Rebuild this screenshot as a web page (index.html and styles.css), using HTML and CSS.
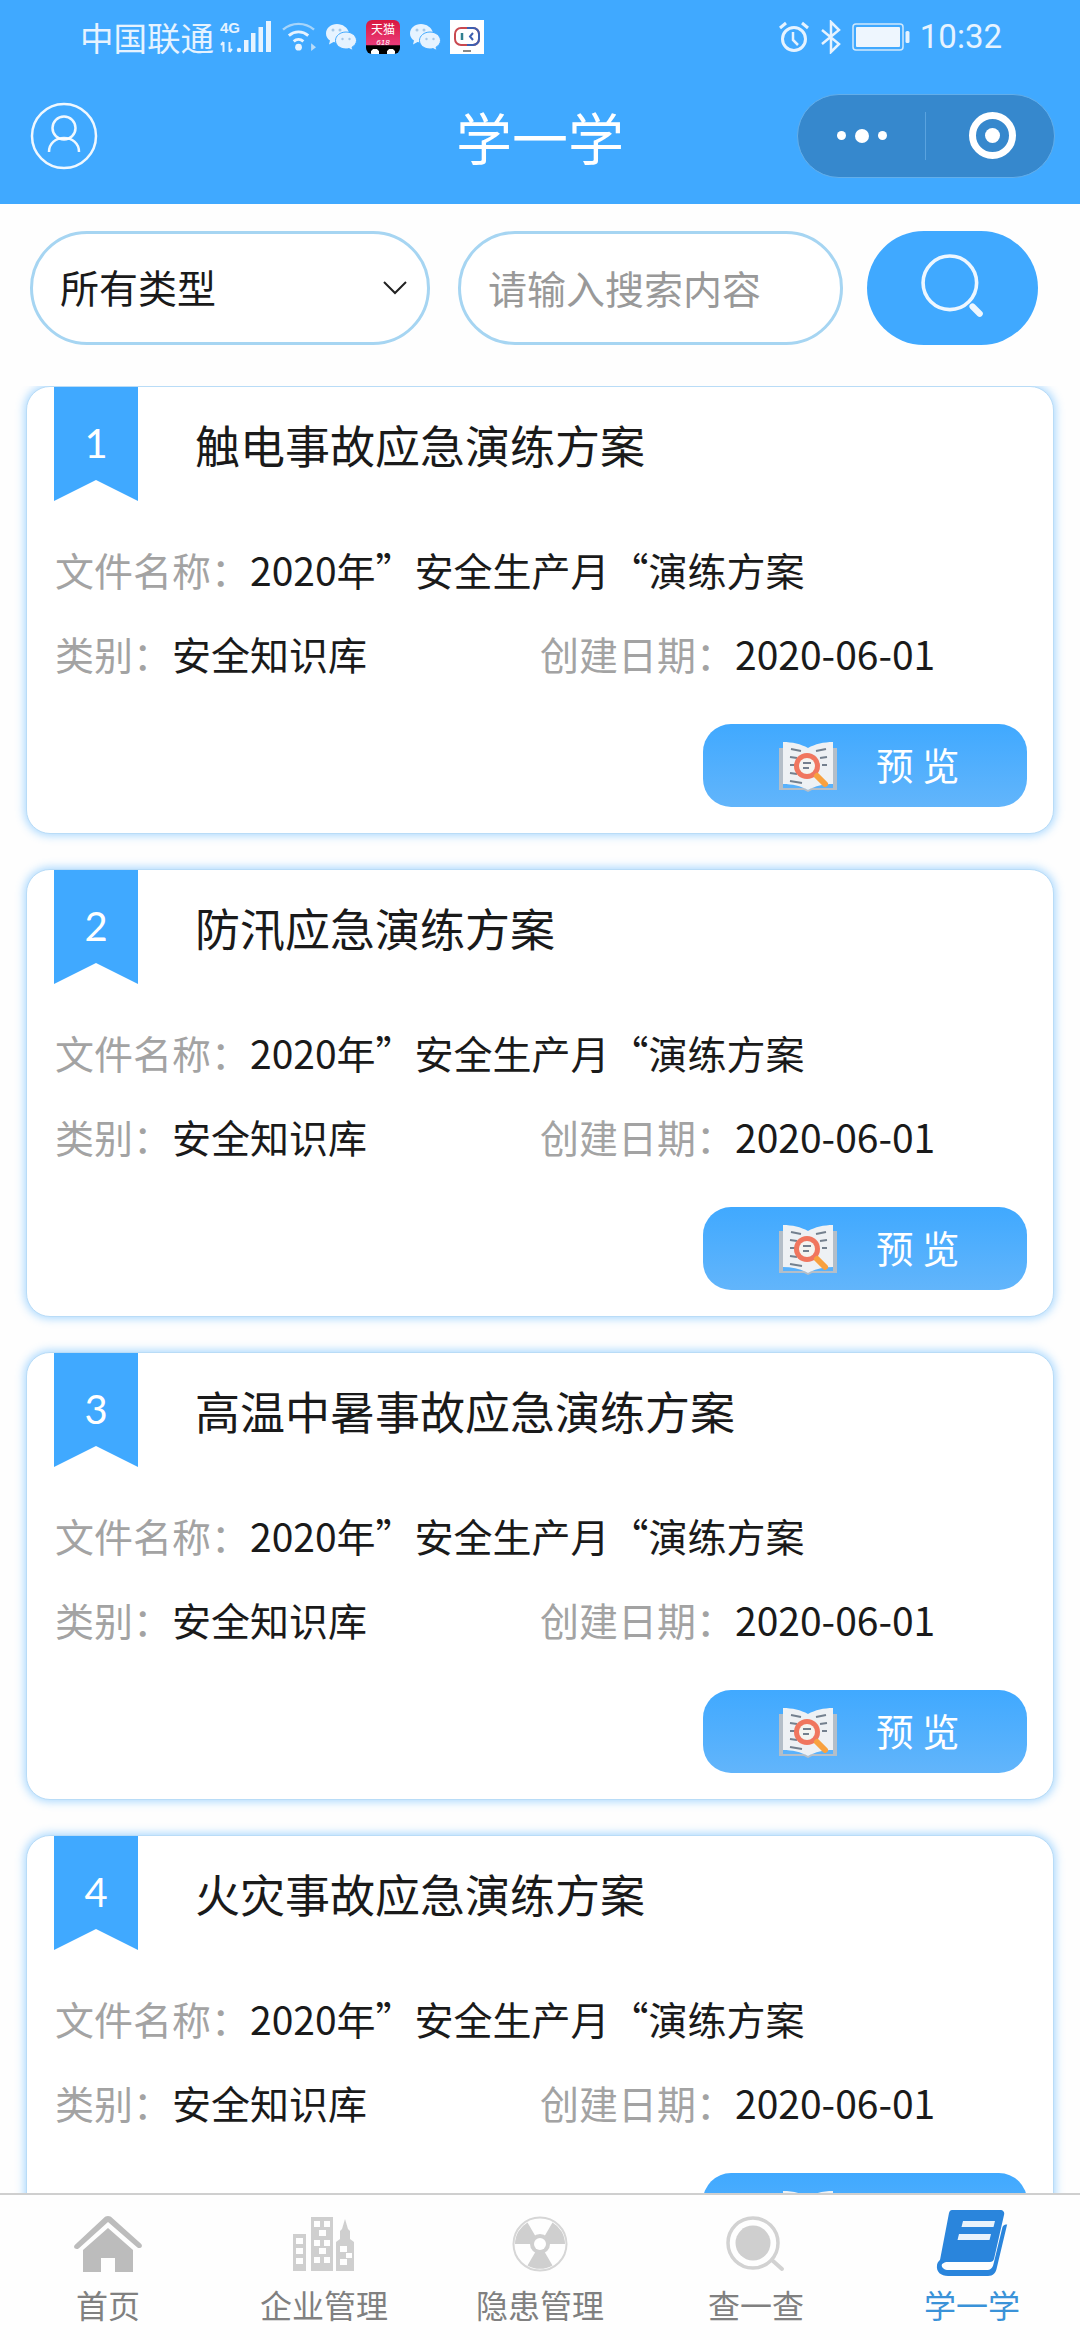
FILE: index.html
```html
<!DOCTYPE html>
<html lang="zh-CN">
<head>
  <meta charset="UTF-8">
  <title>学一学</title>
  <meta name="viewport" content="width=device-width, initial-scale=1">
  <link rel="stylesheet" href="styles.css">
</head>
<body>
<svg class="defs" width="0" height="0">
  <defs>
    <symbol id="wechat" viewBox="0 0 32 28">
      <path d="M12 1C6 1 1 5 1 10.500c0 3 1.600 5.400 4 7l-1 4 4.500-2.500c1 .3 2.200.5 3.500.5 1 0 2-.1 3-.4C19 12 22 9 24 9.500 22.500 4.500 17.700 1 12 1z" fill="#e6f3ff"/>
      <path d="M21 9c-5.800 0-10.500 3.800-10.500 8.500S15.200 26 21 26c1.100 0 2.100-.1 3-.4l4 2-1-3.400c2.700-1.500 4.500-3.900 4.500-6.700C31.500 12.800 26.800 9 21 9z" fill="#e6f3ff" stroke="#40a9ff" stroke-width="1"/>
      <circle cx="8" cy="7" r="1.500" fill="#a5c9e8"/><circle cx="15" cy="7" r="1.500" fill="#a5c9e8"/>
      <circle cx="17.500" cy="16" r="1.200" fill="#a5c9e8"/><circle cx="24.500" cy="16" r="1.200" fill="#a5c9e8"/>
    </symbol>
    <symbol id="book-preview" viewBox="0 0 60 52">
      <path d="M1 8h4v40h22l3 2 3-2h22V8h4v42H34l-4 2-4-2H1z" fill="#b4bec8"/>
      <path d="M5 2c9 0 18 2 25 6 7-4 16-6 25-6v42c-9 0-18 2-25 6-7-4-16-6-25-6z" fill="#eef1f4"/>
      <path d="M13 9l10 2M38 11l10-2M12 17l7 1M42 18l7-1M12 25h5M44 25h5M12 33l7 1M12 41l12 2" stroke="#74808e" stroke-width="2" fill="none"/>
      <circle cx="29" cy="26" r="13" fill="#f0765f"/>
      <circle cx="29" cy="26" r="8" fill="#f4f4f0"/>
      <path d="M25 23h8M25 28h6" stroke="#74808e" stroke-width="2"/>
      <path d="M39 36l8 8" stroke="#f8a13f" stroke-width="6" stroke-linecap="round"/>
    </symbol>
    <symbol id="ribbon-tag" viewBox="0 0 84 114" preserveAspectRatio="none">
      <path d="M0 0h84v114L42 93 0 114z" fill="#40a9ff"/>
    </symbol>
  </defs>
</svg>

<div class="page">
  <header class="topbar">
    <div class="statusbar">
      <div class="status-left">
        <span class="carrier">中国联通</span>
        <svg class="ic-signal" width="52" height="33" viewBox="0 0 52 33">
          <text x="0" y="13" class="sig-text">4G</text>
          <path d="M3.500 32V22M1 25l2.500-3M9.500 22v10M12 29l-2.500 3" fill="none" stroke="#e6f3ff" stroke-width="2"/>
          <path d="M24 20h4.500v12H24zM31 13h4.500v19H31zM38.500 7h4.500v25h-4.500zM46 1h5v31h-5z" fill="#e6f3ff"/>
          <circle cx="19" cy="30" r="2.200" fill="#e6f3ff"/>
        </svg>
        <svg class="ic-wifi" width="37" height="31" viewBox="0 0 38 32">
          <path d="M2 9c9-8 23-8 32 0" fill="none" stroke="#a5d4fa" stroke-width="2.500"/>
          <path d="M8 15c6-5 14-5 20 0" fill="none" stroke="#e6f3ff" stroke-width="3"/>
          <path d="M13 21c3-2.500 7-2.500 10 0" fill="none" stroke="#e6f3ff" stroke-width="3"/>
          <circle cx="18" cy="27" r="3.500" fill="#e6f3ff"/>
          <path d="M31 23l5 4-5 4z" fill="#b9dcf9"/>
        </svg>
        <svg class="ic-app" width="32" height="28"><use href="#wechat"/></svg>
        <div class="app-tmall">
          <span class="tmall-text">天猫</span>
          <span class="tmall-sale">618</span>
          <span class="tmall-eyes"></span>
        </div>
        <svg class="ic-app" width="32" height="28"><use href="#wechat"/></svg>
        <div class="app-robot">
          <svg width="32" height="34" viewBox="0 0 32 34">
            <rect x="4" y="8" width="24" height="17" rx="6" fill="none" stroke="#c9484f" stroke-width="2"/>
            <path d="M16 8h6a6 6 0 0 1 6 6v5a6 6 0 0 1-6 6h-6" fill="none" stroke="#3c5fb0" stroke-width="2"/>
            <path d="M11 13v7" stroke="#2f7f8f" stroke-width="2.500"/>
            <path d="M22 13l-3 3.500 3 3.500" fill="none" stroke="#3c5fb0" stroke-width="2"/>
            <path d="M12 31h8" stroke="#888" stroke-width="2"/>
          </svg>
        </div>
      </div>
      <div class="status-right">
        <svg width="32" height="32" viewBox="0 0 32 32">
          <circle cx="16" cy="18" r="11.500" fill="none" stroke="#e6f3ff" stroke-width="3"/>
          <path d="M15 11v8l5 5" fill="none" stroke="#e6f3ff" stroke-width="2.500"/>
          <path d="M2 7l6-5M30 7l-6-5" stroke="#e6f3ff" stroke-width="3"/>
        </svg>
        <svg width="22" height="34" viewBox="0 0 22 34">
          <path d="M2 10l17 14-8 8V2l8 8L2 24" fill="none" stroke="#e6f3ff" stroke-width="2.500"/>
        </svg>
        <svg width="58" height="28" viewBox="0 0 58 28">
          <rect x="1" y="1" width="50" height="26" rx="3" fill="none" stroke="#cfe8fc" stroke-width="1.500"/>
          <rect x="4" y="4" width="44" height="20" rx="1" fill="#eef6fe"/>
          <rect x="53.500" y="8" width="4" height="12" rx="1.500" fill="#e6f3ff"/>
        </svg>
        <span class="clock">10:32</span>
      </div>
    </div>
    <nav class="navbar">
      <svg class="avatar" width="68" height="68" viewBox="0 0 68 68">
        <circle cx="34" cy="34" r="32" fill="none" stroke="#fff" stroke-width="2.500" opacity=".92"/>
        <circle cx="34" cy="26" r="11.500" fill="none" stroke="#fff" stroke-width="2.500" opacity=".92"/>
        <path d="M19 50c0-9 7-14 15-14s15 5 15 14" fill="none" stroke="#fff" stroke-width="2.500" opacity=".92"/>
      </svg>
      <div class="nav-title">学一学</div>
      <div class="capsule">
        <div class="capsule-dots">
          <span class="dot"></span><span class="dot dot-big"></span><span class="dot"></span>
        </div>
        <span class="capsule-line"></span>
        <div class="capsule-target"><span class="target-ring"></span></div>
      </div>
    </nav>
  </header>

  <section class="filters">
    <div class="select-box">
      <span>所有类型</span>
      <svg width="24" height="16" viewBox="0 0 24 16"><path d="M1 2l11 11L23 2" fill="none" stroke="#222" stroke-width="2"/></svg>
    </div>
    <input class="search-input" type="text" placeholder="请输入搜索内容">
    <button class="search-btn">
      <svg width="68" height="68" viewBox="0 0 66 66">
        <circle cx="28" cy="28" r="26" fill="none" stroke="#eef7ff" stroke-width="3.500"/>
        <path d="M50 51l7 7" stroke="#eef7ff" stroke-width="6" stroke-linecap="round"/>
      </svg>
    </button>
  </section>

  <main class="list">
    <article class="doc-card">
      <div class="ribbon"><svg width="84" height="114"><use href="#ribbon-tag"/></svg><span>1</span></div>
      <h3 class="doc-title">触电事故应急演练方案</h3>
      <p class="doc-row"><span class="lbl">文件名称：</span>2020年”安全生产月“演练方案</p>
      <div class="doc-row doc-meta">
        <p class="meta-left"><span class="lbl">类别：</span>安全知识库</p>
        <p><span class="lbl">创建日期：</span>2020-06-01</p>
      </div>
      <div class="doc-foot">
        <a class="preview-btn"><svg width="60" height="52"><use href="#book-preview"/></svg><span>预 览</span></a>
      </div>
    </article>

    <article class="doc-card">
      <div class="ribbon"><svg width="84" height="114"><use href="#ribbon-tag"/></svg><span>2</span></div>
      <h3 class="doc-title">防汛应急演练方案</h3>
      <p class="doc-row"><span class="lbl">文件名称：</span>2020年”安全生产月“演练方案</p>
      <div class="doc-row doc-meta">
        <p class="meta-left"><span class="lbl">类别：</span>安全知识库</p>
        <p><span class="lbl">创建日期：</span>2020-06-01</p>
      </div>
      <div class="doc-foot">
        <a class="preview-btn"><svg width="60" height="52"><use href="#book-preview"/></svg><span>预 览</span></a>
      </div>
    </article>

    <article class="doc-card">
      <div class="ribbon"><svg width="84" height="114"><use href="#ribbon-tag"/></svg><span>3</span></div>
      <h3 class="doc-title">高温中暑事故应急演练方案</h3>
      <p class="doc-row"><span class="lbl">文件名称：</span>2020年”安全生产月“演练方案</p>
      <div class="doc-row doc-meta">
        <p class="meta-left"><span class="lbl">类别：</span>安全知识库</p>
        <p><span class="lbl">创建日期：</span>2020-06-01</p>
      </div>
      <div class="doc-foot">
        <a class="preview-btn"><svg width="60" height="52"><use href="#book-preview"/></svg><span>预 览</span></a>
      </div>
    </article>

    <article class="doc-card">
      <div class="ribbon"><svg width="84" height="114"><use href="#ribbon-tag"/></svg><span>4</span></div>
      <h3 class="doc-title">火灾事故应急演练方案</h3>
      <p class="doc-row"><span class="lbl">文件名称：</span>2020年”安全生产月“演练方案</p>
      <div class="doc-row doc-meta">
        <p class="meta-left"><span class="lbl">类别：</span>安全知识库</p>
        <p><span class="lbl">创建日期：</span>2020-06-01</p>
      </div>
      <div class="doc-foot">
        <a class="preview-btn"><svg width="60" height="52"><use href="#book-preview"/></svg><span>预 览</span></a>
      </div>
    </article>
  </main>

  <footer class="tabbar">
    <div class="tab">
      <svg width="70" height="58" viewBox="0 0 70 58">
        <path d="M35 1c2 0 3 .8 4 1.800l29 26c2 2 .5 4.700-2 4.200-1 0-1.500-.5-2.500-1.300L35 7 6.500 32.700C5.500 33.500 5 34 4 34c-2.500.2-4-2.200-2-4.200l29-27C32 1.800 33 1 35 1z" fill="#bcbcbc"/>
        <path d="M35 13l25 22v22H42V43H28v14H10V35z" fill="#bcbcbc"/>
      </svg>
      <span>首页</span>
    </div>
    <div class="tab">
      <svg width="62" height="56" viewBox="0 0 62 56">
        <path fill="#cfcfcf" fill-rule="evenodd" d="M0 18h13v37H0zM3 22v6h7v-6zM3 32v6h7v-6zM3 42v6h7v-6zM18 1h22v54H18zM21 5v6h6V5zM31 5v6h6V5zM26 14v6h7v-6zM21 24v6h6v-6zM31 24v6h6v-6zM26 32v6h7v-6zM21 41v6h6v-6zM31 41v6h6v-6z"/>
        <path fill="#cfcfcf" fill-rule="evenodd" d="M52 3l3 10 2 2v8l4 3v29H43V26l4-3v-8l2-2zM47 30v6h7v-6zM53 37v5h6v-5zM47 43v6h7v-6z"/>
      </svg>
      <span>企业管理</span>
    </div>
    <div class="tab">
      <svg width="56" height="56" viewBox="0 0 56 56">
        <circle cx="28" cy="28" r="26.500" fill="none" stroke="#d6d6d6" stroke-width="2"/>
        <path fill="#cfcfcf" d="M28 28L53 28A25 25 0 0 0 40.500 6.500zM28 28L15.500 6.500A25 25 0 0 0 3 28zM28 28L15.500 49.500A25 25 0 0 0 40.500 49.500z"/>
        <circle cx="28" cy="28" r="10" fill="#cfcfcf"/>
        <circle cx="28" cy="28" r="6" fill="#fff"/>
      </svg>
      <span>隐患管理</span>
    </div>
    <div class="tab">
      <svg width="60" height="56" viewBox="0 0 60 56">
        <circle cx="27" cy="27" r="25" fill="none" stroke="#d2d2d2" stroke-width="3.500"/>
        <circle cx="27" cy="27" r="17.500" fill="#cfcfcf"/>
        <path d="M47 45l9 8" stroke="#d2d2d2" stroke-width="4" stroke-linecap="round"/>
      </svg>
      <span>查一查</span>
    </div>
    <div class="tab tab-on">
      <svg class="tab-book" width="72" height="68" viewBox="0 0 72 68">
        <path d="M16 1h48c3 0 5 2 4 5L58 50c-.5 2-2 3-4 3H12c-4 0-7 2-7 5-1-1-2-4-1-7L13 4c.500-2 1.500-3 3-3z" fill="#2a85dc"/>
        <path d="M71 16L61 58c-1 6-4 9-9 9H12C5 67 0 63 1 56c.5-3 3-6 6-6-1 2-1.500 3-1.500 5 0 4 3 6 7 6h38c4 0 6-2 7-6l9-37c1-2 3-3 5-2z" fill="#2a85dc"/>
        <path d="M27 12h32l-1.500 6h-32zM23 25h32l-1.500 6h-32z" fill="#e8f3fc"/>
      </svg>
      <span>学一学</span>
    </div>
  </footer>
</div>
</body>
</html>
```

FILE: styles.css
```css
* { box-sizing: border-box; margin: 0; padding: 0; }

body {
  font-family: "Noto Sans CJK SC", "Noto Sans", sans-serif;
  background: #fefefe;
  color: #1a1a1a;
}

.defs { position: absolute; }

.page {
  width: 1080px;
  height: 2340px;
  display: flex;
  flex-direction: column;
  overflow: hidden;
}

/* header */
.topbar {
  height: 204px;
  background: #40a9ff;
  flex-shrink: 0;
}

.statusbar {
  height: 73px;
  padding: 0 78px 0 80px;
  display: flex;
  align-items: center;
  justify-content: space-between;
}

.status-left { display: flex; align-items: center; }
.status-right { display: flex; align-items: center; gap: 10px; }

.carrier {
  font-size: 33.5px;
  line-height: 40px;
  color: #e6f3ff;
  margin-right: 6px;
  white-space: nowrap;
}

.sig-text {
  font-family: "Liberation Sans", sans-serif;
  font-size: 15px;
  font-weight: 700;
  fill: #e6f3ff;
}

.ic-signal { margin-right: 9px; }
.ic-wifi { margin-right: 7px; }
.ic-app { margin-right: 9px; }

.app-tmall {
  width: 34px;
  height: 34px;
  margin-right: 9px;
  border-radius: 6px;
  background: linear-gradient(#d8183f 0, #ea3a78 72%, #000 76%);
  overflow: hidden;
  display: flex;
  flex-direction: column;
  align-items: center;
}
.tmall-text { font-size: 12px; line-height: 18px; color: #fff; white-space: nowrap; }
.tmall-sale {
  font-family: "Liberation Sans", sans-serif;
  font-size: 8px;
  line-height: 9px;
  font-style: italic;
  color: #fff;
}
.tmall-eyes {
  width: 26px;
  height: 7px;
  background: radial-gradient(circle at 5px 6px, #fff 4px, transparent 4.5px), radial-gradient(circle at 21px 6px, #fff 4px, transparent 4.5px);
}

.app-robot {
  width: 34px;
  height: 34px;
  background: #fff;
  display: flex;
  align-items: center;
  justify-content: center;
}

.clock {
  font-family: Roboto, sans-serif;
  font-size: 33px;
  color: #e6f3ff;
}

.navbar {
  height: 131px;
  padding: 0 25px 6px 30px;
  display: flex;
  align-items: center;
  justify-content: space-between;
  position: relative;
}

.nav-title {
  position: absolute;
  left: 0;
  right: 0;
  text-align: center;
  font-size: 56px;
  line-height: 70px;
  color: #fff;
}

.capsule {
  width: 258px;
  height: 84px;
  border-radius: 42px;
  background: #3688cd;
  border: 1.500px solid #63aeea;
  display: flex;
  align-items: center;
  z-index: 1;
}
.capsule-dots {
  flex: 1;
  display: flex;
  align-items: center;
  justify-content: center;
  gap: 9px;
}
.dot { width: 9px; height: 9px; border-radius: 50%; background: #fff; }
.dot-big { width: 14px; height: 14px; }
.capsule-line { width: 1px; height: 48px; background: #5aa3df; }
.capsule-target { width: 128px; display: flex; justify-content: center; padding-left: 4px; }
.target-ring {
  width: 47px;
  height: 47px;
  border-radius: 50%;
  border: 7px solid #fff;
  position: relative;
}
.target-ring::after {
  content: "";
  position: absolute;
  left: 9px;
  top: 9px;
  width: 15px;
  height: 15px;
  border-radius: 50%;
  background: #fff;
}

/* filter row */
.filters {
  flex-shrink: 0;
  height: 182px;
  padding: 27px 42px 0 30px;
  display: flex;
}

.select-box, .search-input {
  height: 114px;
  border: 3px solid #a6d5f2;
  border-radius: 57px;
  background: #fff;
  font-family: inherit;
  font-size: 39px;
}

.select-box {
  width: 400px;
  margin-right: 28px;
  padding: 0 20px 4px 27px;
  display: flex;
  align-items: center;
  justify-content: space-between;
  color: #1a1a1a;
}

.select-box svg { margin-top: 4px; }

.search-input {
  width: 385px;
  margin-right: 24px;
  padding: 0 27px 2px;
  outline: none;
}
.search-input::placeholder { color: #999; opacity: 1; }

.search-btn {
  width: 171px;
  height: 114px;
  padding-left: 4px;
  border: none;
  border-radius: 57px;
  background: #40a9ff;
  display: flex;
  align-items: center;
  justify-content: center;
}

/* cards */
.list {
  flex: 1;
  min-height: 0;
  overflow: hidden;
  padding-left: 26px;
  padding-right: 26px;
  display: flex;
  flex-direction: column;
  gap: 35px;
}

.doc-card {
  flex-shrink: 0;
  position: relative;
  height: 448px;
  padding: 0 26px 28px 28px;
  background: #fff;
  border-radius: 24px;
  border: 1px solid #b9dcf7;
  box-shadow: 0 0 9px 2px rgba(64, 169, 255, .42);
}

.ribbon {
  position: absolute;
  left: 27px;
  top: 0;
  width: 84px;
  height: 114px;
}
.ribbon span {
  position: absolute;
  left: 0;
  right: 0;
  top: 31px;
  text-align: center;
  font-family: Lato, sans-serif;
  font-size: 40px;
  line-height: 50px;
  color: #fff;
}

.doc-title {
  height: 140px;
  padding-left: 140px;
  font-size: 45px;
  font-weight: 400;
  line-height: 116px;
  color: #1a1a1a;
}

.doc-row {
  height: 84px;
  font-size: 39px;
  line-height: 84px;
  color: #1a1a1a;
  white-space: nowrap;
}

.lbl { color: #a3a3a3; }

.doc-meta { display: flex; }
.meta-left { width: 485px; }

.doc-foot {
  margin-top: 29px;
  display: flex;
  justify-content: flex-end;
}

.preview-btn {
  width: 324px;
  height: 83px;
  border-radius: 28px;
  background: linear-gradient(#40a9ff, #62b5fb);
  display: flex;
  align-items: center;
  color: #fff;
  font-size: 37.5px;
  padding-left: 75px;
  gap: 38px;
}
.preview-btn span { padding-bottom: 4px; }

/* bottom tabs */
.tabbar {
  flex-shrink: 0;
  position: relative;
  height: 147px;
  background: #fefefe;
  border-top: 2px solid #cfcfcf;
  display: grid;
  grid-template-columns: repeat(5, 216px);
}

.tab {
  display: flex;
  flex-direction: column;
  align-items: center;
  padding-top: 20px;
  color: #808080;
  font-size: 32px;
  line-height: 40px;
}
.tab svg { height: 58px; margin-bottom: 11px; }
.tab-on { color: #3a92d8; padding-top: 14px; }
.tab svg.tab-book { height: 68px; margin-bottom: 7px; }
```
